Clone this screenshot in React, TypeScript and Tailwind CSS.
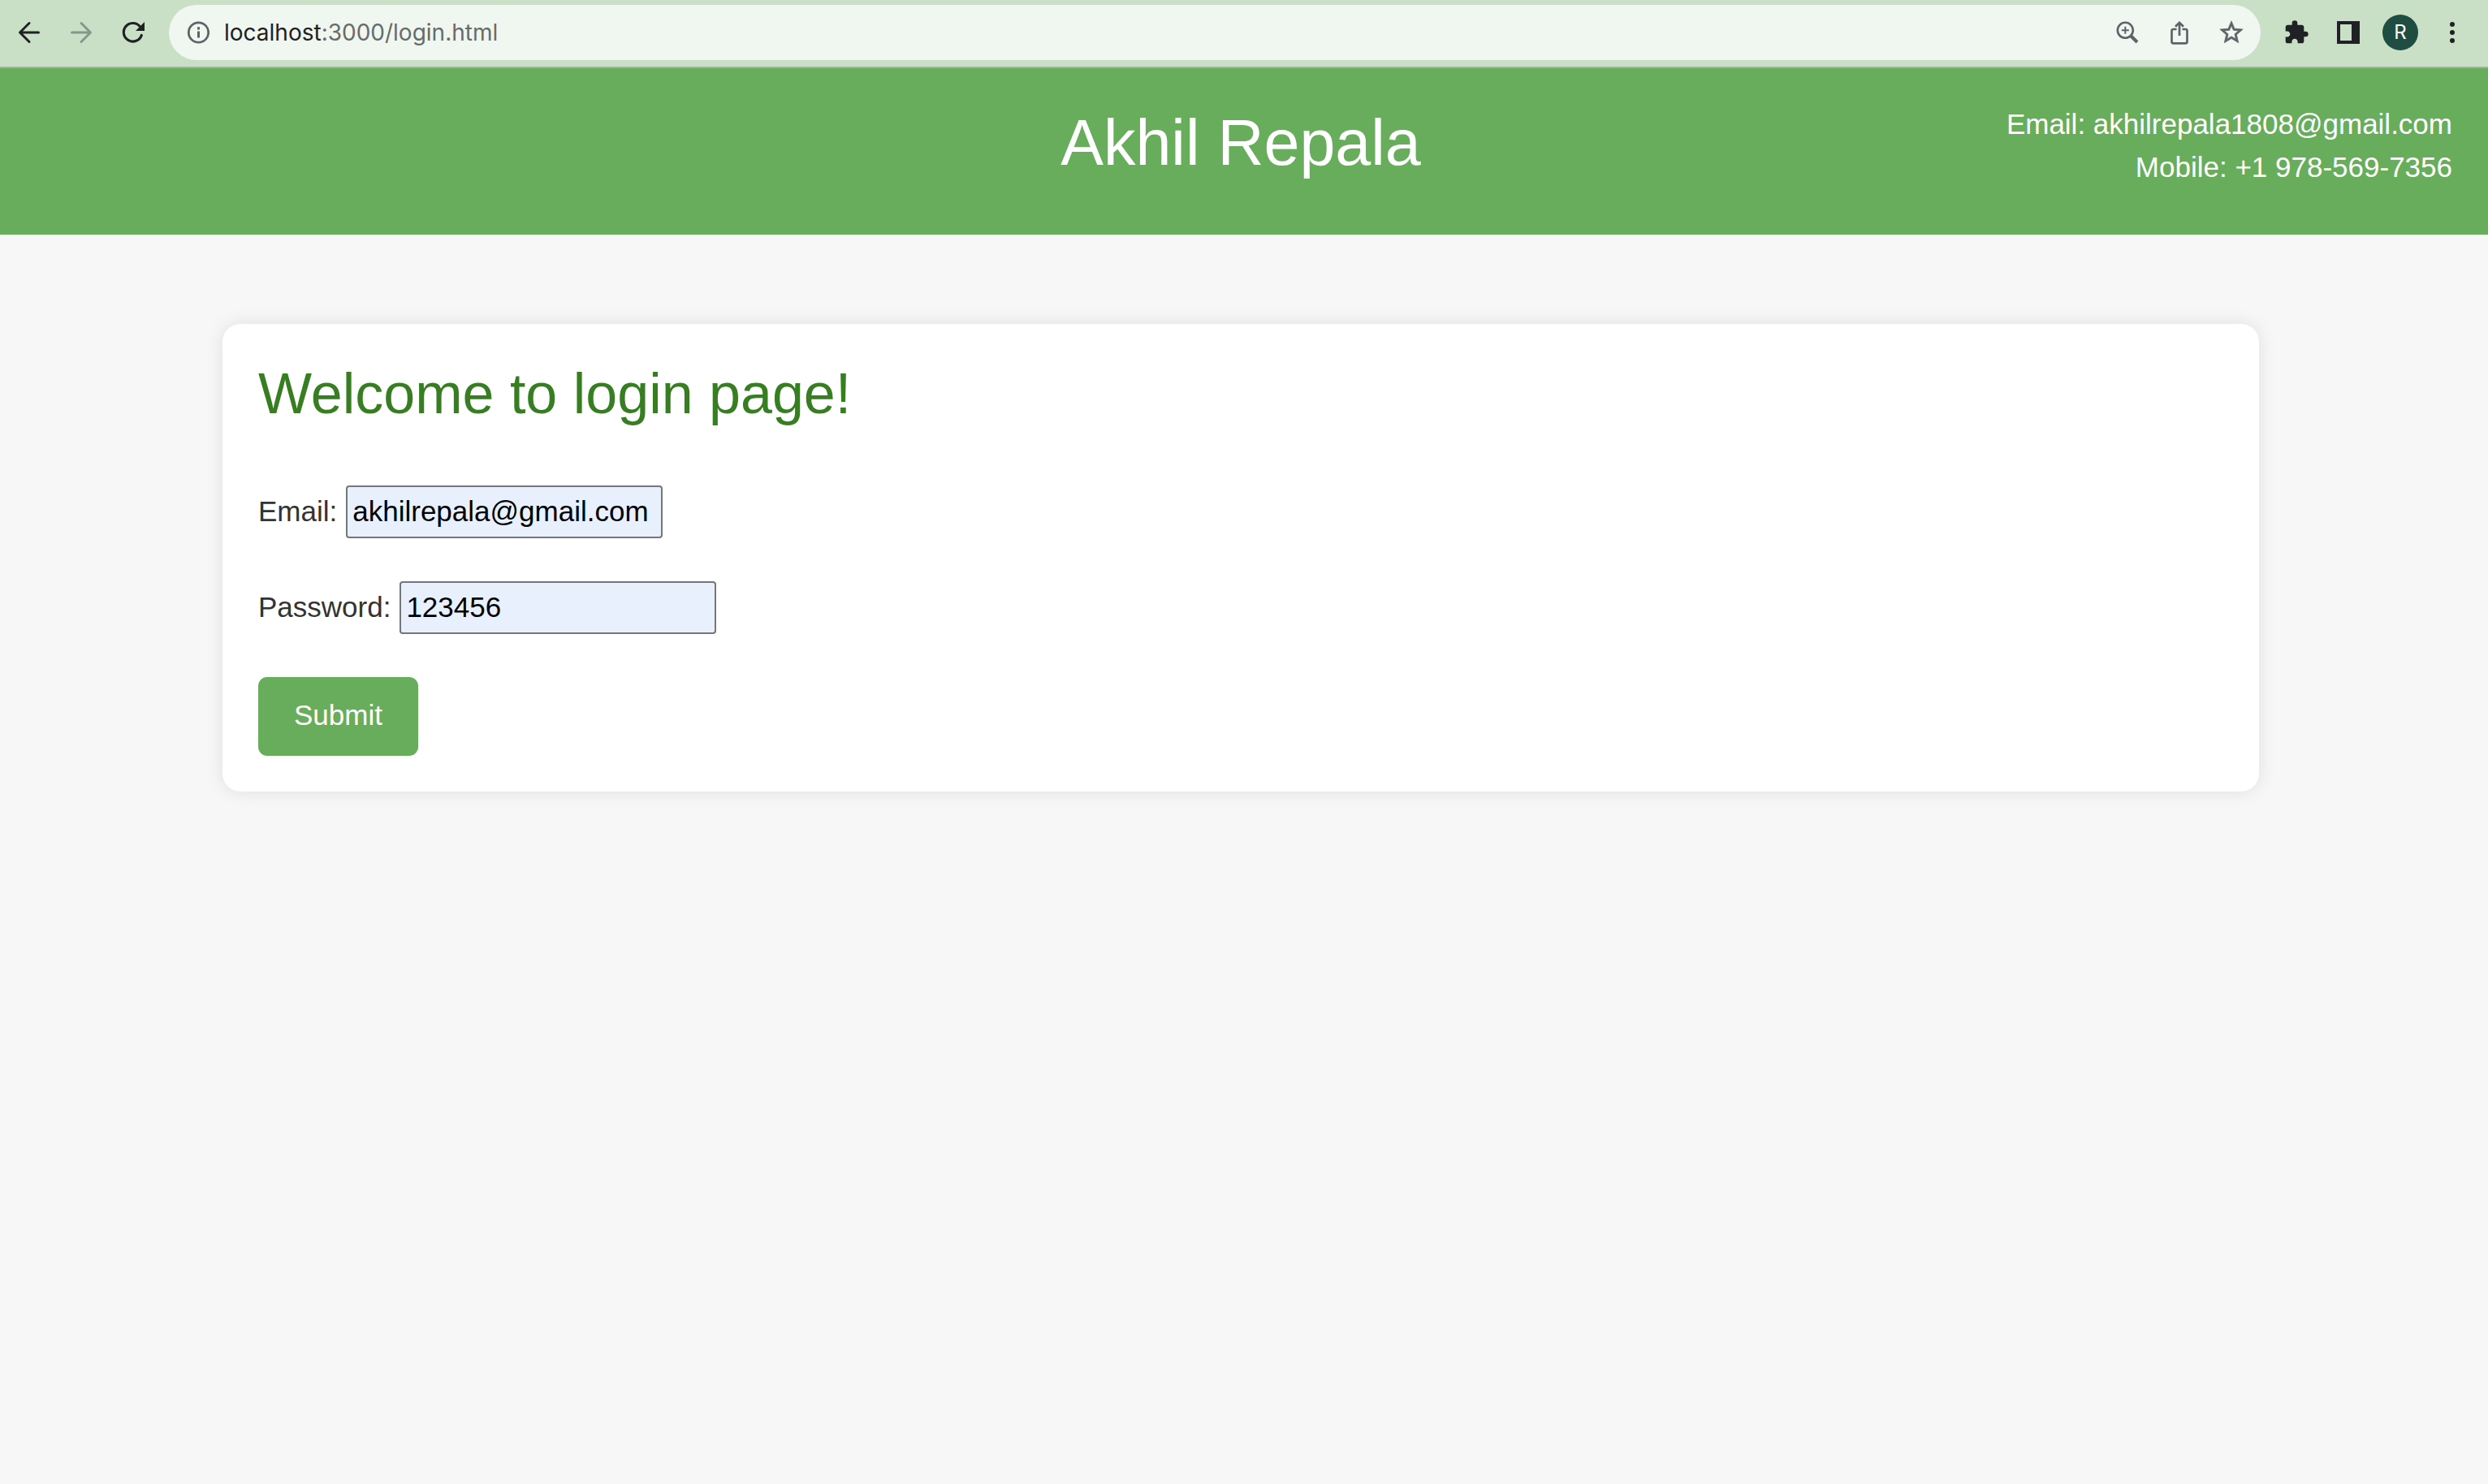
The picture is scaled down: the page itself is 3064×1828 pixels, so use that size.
import type { ReactNode } from "react";

function IconButton({ label, children, className = "text-[#202124]" }: { label: string; children: ReactNode; className?: string }) {
  return (
    <button type="button" aria-label={label} className={`flex h-16 w-16 shrink-0 items-center justify-center ${className}`}>
      {children}
    </button>
  );
}

function BrowserBar() {
  return (
    <div className="flex h-[84px] items-center border-b-2 border-[#a1b39f] bg-[#cae0c6] pr-3 pb-0.5 pl-1">
      <IconButton label="Back">
        <svg viewBox="0 0 32 32" className="size-8" fill="none" stroke="currentColor" strokeWidth="3" strokeLinecap="round" strokeLinejoin="round">
          <path d="M27.5 16H5M16 4.5 4.5 16 16 27.5" />
        </svg>
      </IconButton>
      <IconButton label="Forward" className="text-[#87968a]">
        <svg viewBox="0 0 32 32" className="size-8" fill="none" stroke="currentColor" strokeWidth="3" strokeLinecap="round" strokeLinejoin="round">
          <path d="M4.5 16H27M16 4.5 27.5 16 16 27.5" />
        </svg>
      </IconButton>
      <IconButton label="Reload">
        <svg viewBox="0 0 32 32" className="size-8">
          <path d="M26.300 19.500A11.300 11.300 0 1 1 24 8.200" fill="none" stroke="currentColor" strokeWidth="3.2" strokeLinecap="round" />
          <path d="M30 3v11H19z" fill="currentColor" />
        </svg>
      </IconButton>

      <div className="ml-3 flex h-[68px] flex-1 items-center rounded-full bg-[#f0f6f0] pr-1 pl-[22px] text-[#5f6368]">
        <svg viewBox="0 0 28 28" className="size-7" fill="none" stroke="currentColor">
          <circle cx="14.500" cy="14" r="12.200" strokeWidth="2.8" />
          <path d="M14.500 12.500V20.500M14.500 7.300v3.200" strokeWidth="3" />
        </svg>
        <a href="#login" className="ml-[18px] font-['Inter',sans-serif] text-[28px] leading-8 text-[#676c69]">
          <span className="text-[#202124]">localhost</span>:3000/login.html
        </a>
        <div className="ml-auto flex">
          <IconButton label="Zoom" className="text-[#5f6368]">
            <svg viewBox="0 0 32 32" className="size-8" fill="none" stroke="currentColor">
              <circle cx="13.300" cy="13.300" r="9.500" strokeWidth="2.6" />
              <path d="M13.300 8.800v9M8.800 13.300h9" strokeWidth="2" />
              <path d="m20.500 20.500 7.500 7.500" strokeWidth="4" />
            </svg>
          </IconButton>
          <IconButton label="Share" className="text-[#5f6368]">
            <svg viewBox="0 0 32 32" className="size-8" fill="none" stroke="currentColor" strokeWidth="2.7">
              <path d="M12.500 12H8.500a2 2 0 0 0-2 2v13.300a2 2 0 0 0 2 2h15a2 2 0 0 0 2-2V14a2 2 0 0 0-2-2H19.500" />
              <path d="M16 20V4M11 8.800l5-5 5 5" />
            </svg>
          </IconButton>
          <IconButton label="Bookmark" className="text-[#5f6368]">
            <svg viewBox="0 0 24 24" className="size-[34px]" fill="currentColor" stroke="currentColor" strokeWidth="0.5">
              <path d="m22 9.24-7.19-.62L12 2 9.19 8.63 2 9.24l5.46 4.73L5.82 21 12 17.27 18.18 21l-1.63-7.03L22 9.24zM12 15.4l-3.76 2.27 1-4.28-3.32-2.88 4.38-.38L12 6.1l1.71 4.04 4.38.38-3.32 2.88 1 4.28L12 15.4z" />
            </svg>
          </IconButton>
        </div>
      </div>

      <div className="ml-3 flex">
        <IconButton label="Extensions">
          <svg viewBox="0 0 24 24" className="size-8" fill="currentColor">
            <path d="M20.5 11H19V7c0-1.1-.9-2-2-2h-4V3.500a2.500 2.500 0 0 0-5 0V5H4c-1.100 0-1.990.9-1.990 2v3.800H3.500c1.490 0 2.700 1.210 2.700 2.700s-1.210 2.700-2.700 2.700H2V20c0 1.100.9 2 2 2h3.800v-1.500c0-1.490 1.210-2.700 2.700-2.700s2.700 1.210 2.700 2.700V22H17c1.100 0 2-.9 2-2v-4h1.500a2.500 2.500 0 0 0 0-5z" />
          </svg>
        </IconButton>
        <IconButton label="Side panel">
          <svg viewBox="0 0 28 28" className="size-7" fill="currentColor" fillRule="evenodd">
            <path d="M0 0h28v28H0zM4 4v20h14V4z" />
          </svg>
        </IconButton>
        <IconButton label="Profile" className="text-white">
          <span className="flex size-11 items-center justify-center rounded-full bg-[#1f4d41] font-['Inter',sans-serif] text-2xl">R</span>
        </IconButton>
        <IconButton label="Menu">
          <svg viewBox="0 0 32 32" className="size-8" fill="currentColor">
            <circle cx="16" cy="6" r="3" />
            <circle cx="16" cy="16" r="3" />
            <circle cx="16" cy="26" r="3" />
          </svg>
        </IconButton>
      </div>
    </div>
  );
}

function Field({ id, label, type, value }: { id: string; label: string; type: string; value: string }) {
  return (
    <div className="flex items-center gap-[11px]">
      <label htmlFor={id} className="pb-0.5">{label}</label>
      <input
        id={id}
        type={type}
        defaultValue={value}
        className="h-[65px] w-[390px] rounded-sm border-2 border-[#767676] bg-[#e9f0fd] px-1.5 pb-0.5 text-black"
      />
    </div>
  );
}

export default function App() {
  return (
    <div className="min-h-screen bg-[#f7f7f7] font-['Liberation_Sans',Arial,sans-serif] text-[35px] leading-[53px] text-[#333333]">
      <BrowserBar />
      <header className="relative bg-[#67ad5b] pt-11 pr-2 pb-[66px] text-white">
        <h1 className="text-center text-[79px] leading-[95px]">Akhil Repala</h1>
        <address className="absolute top-[42px] right-11 text-right not-italic">
          <p>Email: akhilrepala1808@gmail.com</p>
          <p>Mobile: +1 978-569-7356</p>
        </address>
      </header>
      <main className="pt-[110px] pr-2">
        <section className="mx-auto max-w-[2508px] rounded-[22px] bg-white p-11 shadow-[0_0_22px_rgba(0,0,0,0.1)]">
          <h2 className="mb-[71px] text-[70px] leading-[84px] text-[#377e22]">Welcome to login page!</h2>
          <form className="flex flex-col items-start gap-[53px]" onSubmit={(e) => e.preventDefault()}>
            <Field id="email" label="Email:" type="email" value="akhilrepala@gmail.com" />
            <Field id="password" label="Password:" type="text" value="123456" />
            <button type="submit" className="rounded-[11px] bg-[#67ad5b] px-11 pt-5 pb-6 text-white">
              Submit
            </button>
          </form>
        </section>
      </main>
    </div>
  );
}
